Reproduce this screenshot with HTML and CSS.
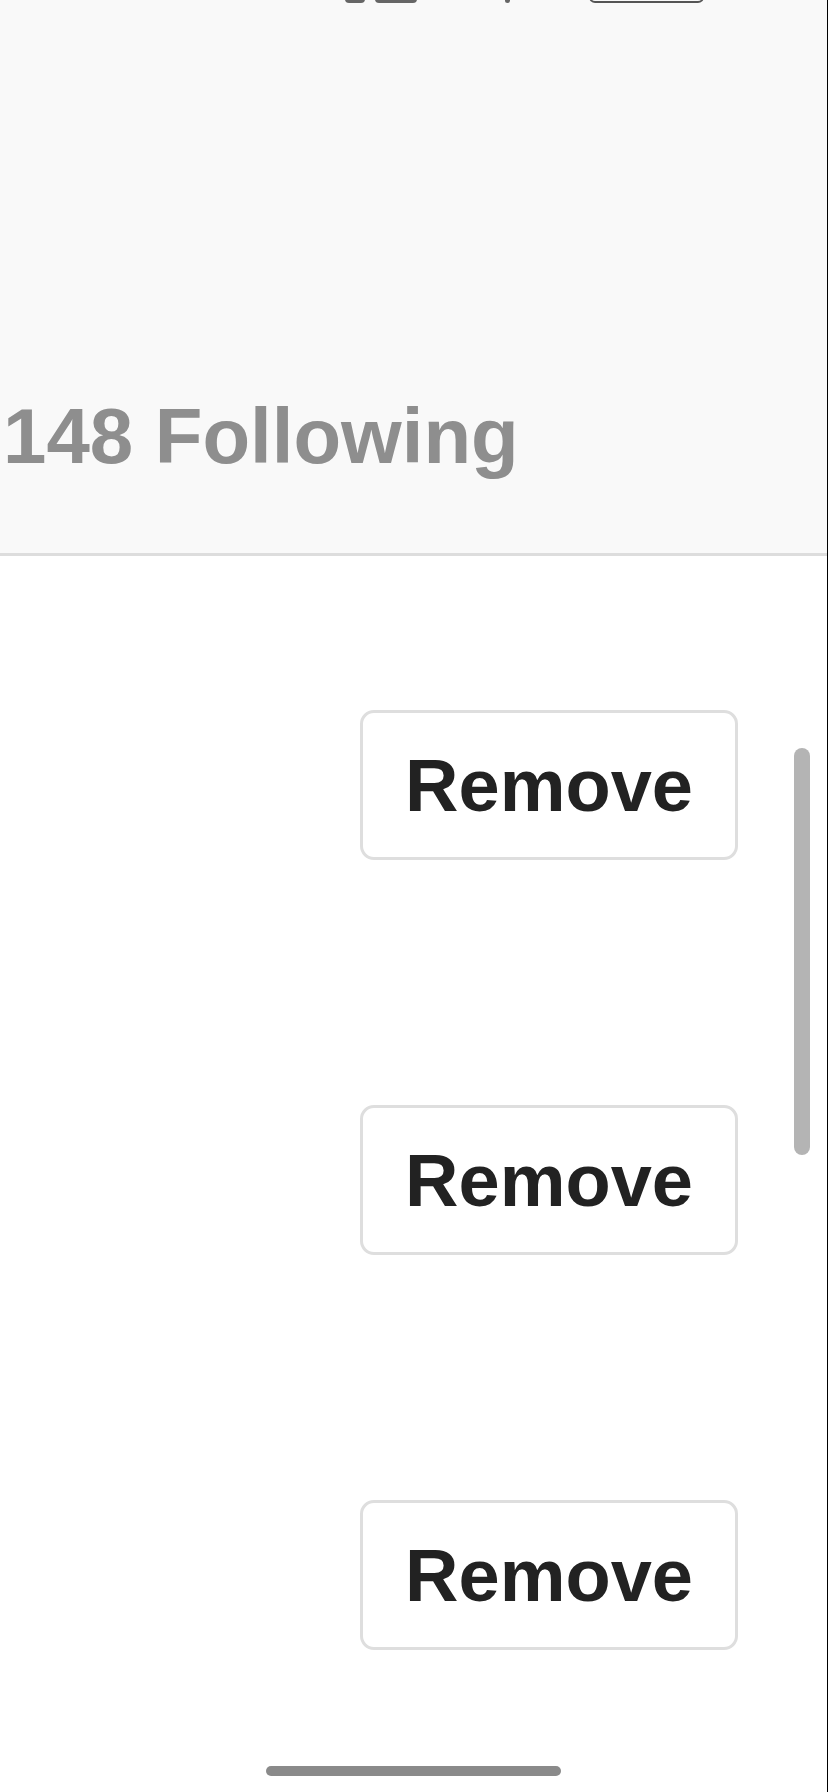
FILE: index.html
```html
<!DOCTYPE html>
<html lang="en">
<head>
  <meta charset="UTF-8">
  <meta name="viewport" content="width=device-width, initial-scale=1.0">
  <title>Following</title>
  <link rel="stylesheet" href="styles.css">
</head>
<body>
  <div class="screen">
    <div class="profile-head">
      <div class="status-strip">
        <span class="bit bit-a"></span>
        <span class="bit bit-b"></span>
        <span class="bit bit-c"></span>
        <span class="bit bit-box"></span>
      </div>
      <div class="follow-count">148 Following</div>
    </div>

    <div class="follow-list">
      <div class="follow-row"><button class="remove-btn">Remove</button></div>
      <div class="follow-row"><button class="remove-btn">Remove</button></div>
      <div class="follow-row"><button class="remove-btn">Remove</button></div>
    </div>

    <div class="scroll-thumb"></div>

    <div class="home-area">
      <div class="home-indicator"></div>
    </div>
  </div>
</body>
</html>
```

FILE: styles.css
```css
* { margin: 0; padding: 0; box-sizing: border-box; }
body {
  font-family: 'Liberation Sans', Arial, sans-serif;
  background-color: #fff;
  color: #222;
  width: 828px;
  height: 1792px;
  overflow: hidden;
}
.screen {
  position: relative;
  width: 100%;
  height: 100%;
  border-right: 1px solid #000;
  background-color: #fff;
}
.profile-head {
  background-color: #f9f9f9;
  height: 556px;
  border-bottom: 3px solid #dddddd;
}
.status-strip {
  display: flex;
  align-items: flex-end;
  height: 3px;
  overflow: hidden;
}
.bit {
  display: block;
  height: 8px;
  background-color: #666;
  border-radius: 4px;
}
.bit-a { width: 20px; margin-left: 345px; }
.bit-b { width: 42px; margin-left: 10px; }
.bit-c { width: 5px; margin-left: 88px; }
.bit-box {
  width: 115px;
  height: 20px;
  margin-left: 79px;
  background-color: transparent;
  border: 2px solid #555;
  border-radius: 6px;
}
.follow-count {
  padding-top: 394px;
  padding-left: 3px;
  font-size: 78px;
  line-height: 78px;
  font-weight: bold;
  color: #8e8e8e;
  white-space: nowrap;
}
.follow-list {
  display: flex;
  flex-direction: column;
  gap: 245px;
  padding-top: 154px;
}
.follow-row {
  display: flex;
  justify-content: flex-end;
  padding-right: 89px;
}
.remove-btn {
  width: 378px;
  height: 150px;
  background-color: #fff;
  border: 3px solid #dedede;
  border-radius: 14px;
  font-family: 'Liberation Sans', Arial, sans-serif;
  font-size: 74px;
  font-weight: bold;
  color: #222;
  cursor: pointer;
}
.scroll-thumb {
  position: absolute;
  top: 748px;
  right: 17px;
  width: 16px;
  height: 407px;
  border-radius: 8px;
  background-color: #b4b4b4;
}
.home-area {
  display: flex;
  justify-content: center;
  padding-top: 116px;
}
.home-indicator {
  width: 295px;
  height: 10px;
  border-radius: 5px;
  background-color: #8a8a8a;
}
```
